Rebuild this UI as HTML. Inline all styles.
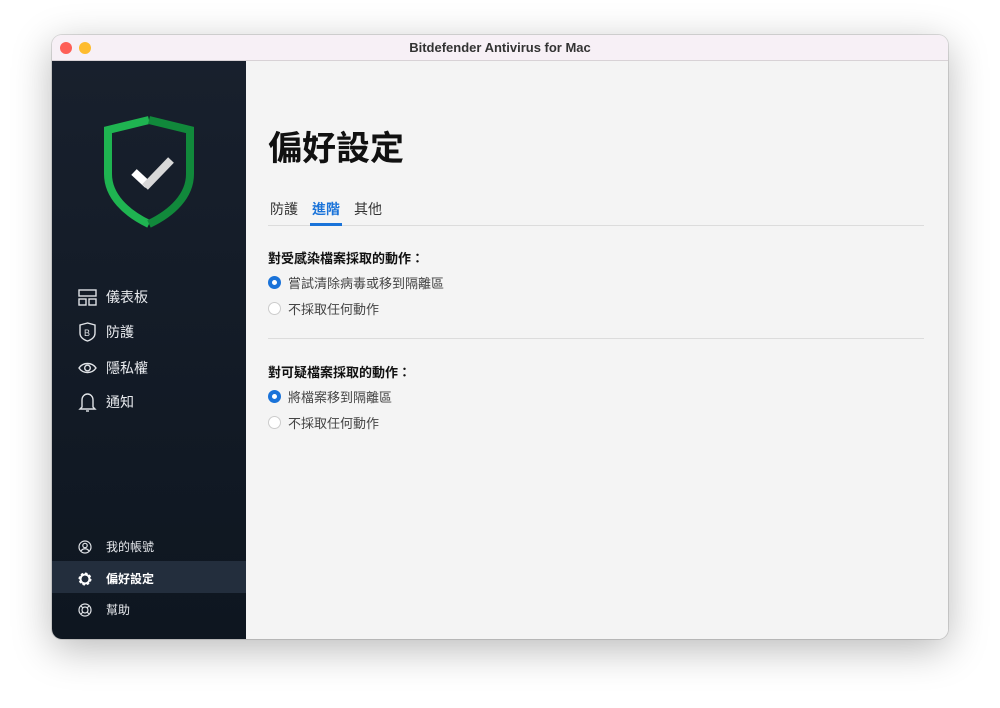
<!DOCTYPE html>
<html><head><meta charset="utf-8"><style>
*{margin:0;padding:0;box-sizing:border-box}
body{width:1000px;height:708px;background:#fff;font-family:"Liberation Sans","Noto Sans CJK TC",sans-serif;position:relative;overflow:hidden}
.win{position:absolute;left:52px;top:35px;width:896px;height:604px;border-radius:10px;overflow:hidden;box-shadow:0 10px 40px rgba(0,0,0,.28),0 0 0 1px rgba(0,0,0,.12)}
.title{height:26px;background:#f7f0f6;border-bottom:1px solid #d8d2d6;text-align:center;font-size:13px;font-weight:bold;color:#333;line-height:26px;position:relative}
.dot{position:absolute;top:7px;width:12px;height:12px;border-radius:50%}
.side{position:absolute;left:0;top:26px;width:194px;bottom:0;background:linear-gradient(#18202d,#0e1620)}
.main{position:absolute;left:194px;top:26px;right:0;bottom:0;background:#f4f4f4}
.nav{position:absolute;left:26px;color:#e8eaee;font-size:14px;display:flex;align-items:center}
.nav svg{margin-right:9px}
.b{position:absolute;left:26px;color:#e8eaee;font-size:12px;display:flex;align-items:center}
.b svg{margin-right:14px}
h1{position:absolute;left:22px;top:60px;font-size:34px;font-weight:bold;color:#111}
.tabs{position:absolute;left:24px;top:138px;font-size:14px;color:#333}
.tabs span{position:absolute;white-space:nowrap}
.hr{position:absolute;left:22px;right:24px;height:1px;background:#dcdcdc}
.lab{position:absolute;left:22px;font-size:13px;font-weight:bold;color:#111}
.opt{position:absolute;left:22px;font-size:13px;color:#444;display:flex;align-items:center}
.r{width:13px;height:13px;border-radius:50%;margin-right:7px;background:#fff;border:1px solid #ccc}
.r.on{background:#fff;border:4px solid #1a73d9}
</style></head><body>
<div class="win">
<div class="title"><div class="dot" style="left:8px;background:#fe5f57"></div><div class="dot" style="left:27px;background:#febc2e"></div>Bitdefender Antivirus for Mac</div>
<div class="side">
<svg style="position:absolute;left:52px;top:55px" width="90" height="112" viewBox="0 0 90 112">
<path d="M45 4 L4 14 V58 C4 80 22 97 45 108" fill="none" stroke="#1fb451" stroke-width="8"/>
<path d="M45 4 L86 14 V58 C86 80 68 97 45 108" fill="none" stroke="#11893b" stroke-width="8"/>
<path d="M30 56 L44 69" stroke="#fff" stroke-width="8" fill="none"/>
<path d="M41 71 L67 44" stroke="#d8d8d8" stroke-width="8" fill="none"/>
</svg>
<div class="nav" style="top:226px"><svg width="19" height="17" fill="none" stroke="#dfe2e6" stroke-width="1.4"><rect x="1" y="1" width="17" height="6"/><rect x="1" y="10" width="7" height="6"/><rect x="11" y="10" width="7" height="6"/></svg>儀表板</div>
<div class="nav" style="top:261px"><svg width="19" height="20" fill="none" stroke="#dfe2e6" stroke-width="1.4"><path d="M9.5 1 L2 3 V11 C2 15 5 17.5 9.5 19 C14 17.5 17 15 17 11 V3 Z"/><text x="6" y="14" font-size="9" fill="#dfe2e6" stroke="none" font-family="Liberation Sans">B</text></svg>防護</div>
<div class="nav" style="top:297px"><svg width="19" height="14" fill="none" stroke="#dfe2e6" stroke-width="1.4"><path d="M1 7 C5 1 14 1 18 7 C14 13 5 13 1 7 Z"/><circle cx="9.5" cy="7" r="2.8"/></svg>隱私權</div>
<div class="nav" style="top:331px"><svg width="19" height="20" fill="none" stroke="#dfe2e6" stroke-width="1.4"><path d="M4 15 V8 C4 4.5 6.5 2 9.5 2 C12.5 2 15 4.5 15 8 V15 L17 17 H2 L4 15 Z"/><path d="M8 19 H11"/></svg>通知</div>
<div class="b" style="top:477px"><svg width="14" height="14" fill="none" stroke="#dfe2e6" stroke-width="1.2"><circle cx="7" cy="7" r="6"/><circle cx="7" cy="5.5" r="2.2"/><path d="M3 11 C5 8 9 8 11 11"/></svg>我的帳號</div>
<div style="position:absolute;left:0;top:500px;width:194px;height:32px;background:#232e3d"></div>
<div class="b" style="top:509px;font-weight:bold;color:#fff"><svg width="14" height="14" viewBox="0 0 14 14"><circle cx="7" cy="7" r="5" fill="none" stroke="#fff" stroke-width="3" stroke-dasharray="2.2 1.7"/><circle cx="7" cy="7" r="4.5" fill="none" stroke="#fff" stroke-width="2"/></svg>偏好設定</div>
<div class="b" style="top:540px"><svg width="14" height="14" fill="none" stroke="#dfe2e6" stroke-width="1.2"><circle cx="7" cy="7" r="6"/><circle cx="7" cy="7" r="3"/><path d="M3 3 L5 5 M11 3 L9 5 M3 11 L5 9 M11 11 L9 9"/></svg>幫助</div>
</div>
<div class="main">
<h1>偏好設定</h1>
<div class="tabs"><span style="left:0">防護</span><span style="left:42px;color:#1a73d9;font-weight:bold">進階</span><span style="left:84px">其他</span></div>
<div class="hr" style="top:164px"></div>
<div style="position:absolute;left:64px;top:162px;width:32px;height:3px;background:#1a73d9"></div>
<div class="lab" style="top:187px">對受感染檔案採取的動作：</div>
<div class="opt" style="top:212px"><div class="r on"></div>嘗試清除病毒或移到隔離區</div>
<div class="opt" style="top:238px"><div class="r"></div>不採取任何動作</div>
<div class="hr" style="top:277px"></div>
<div class="lab" style="top:301px">對可疑檔案採取的動作：</div>
<div class="opt" style="top:326px"><div class="r on"></div>將檔案移到隔離區</div>
<div class="opt" style="top:352px"><div class="r"></div>不採取任何動作</div>
</div>
</div>
</body></html>
